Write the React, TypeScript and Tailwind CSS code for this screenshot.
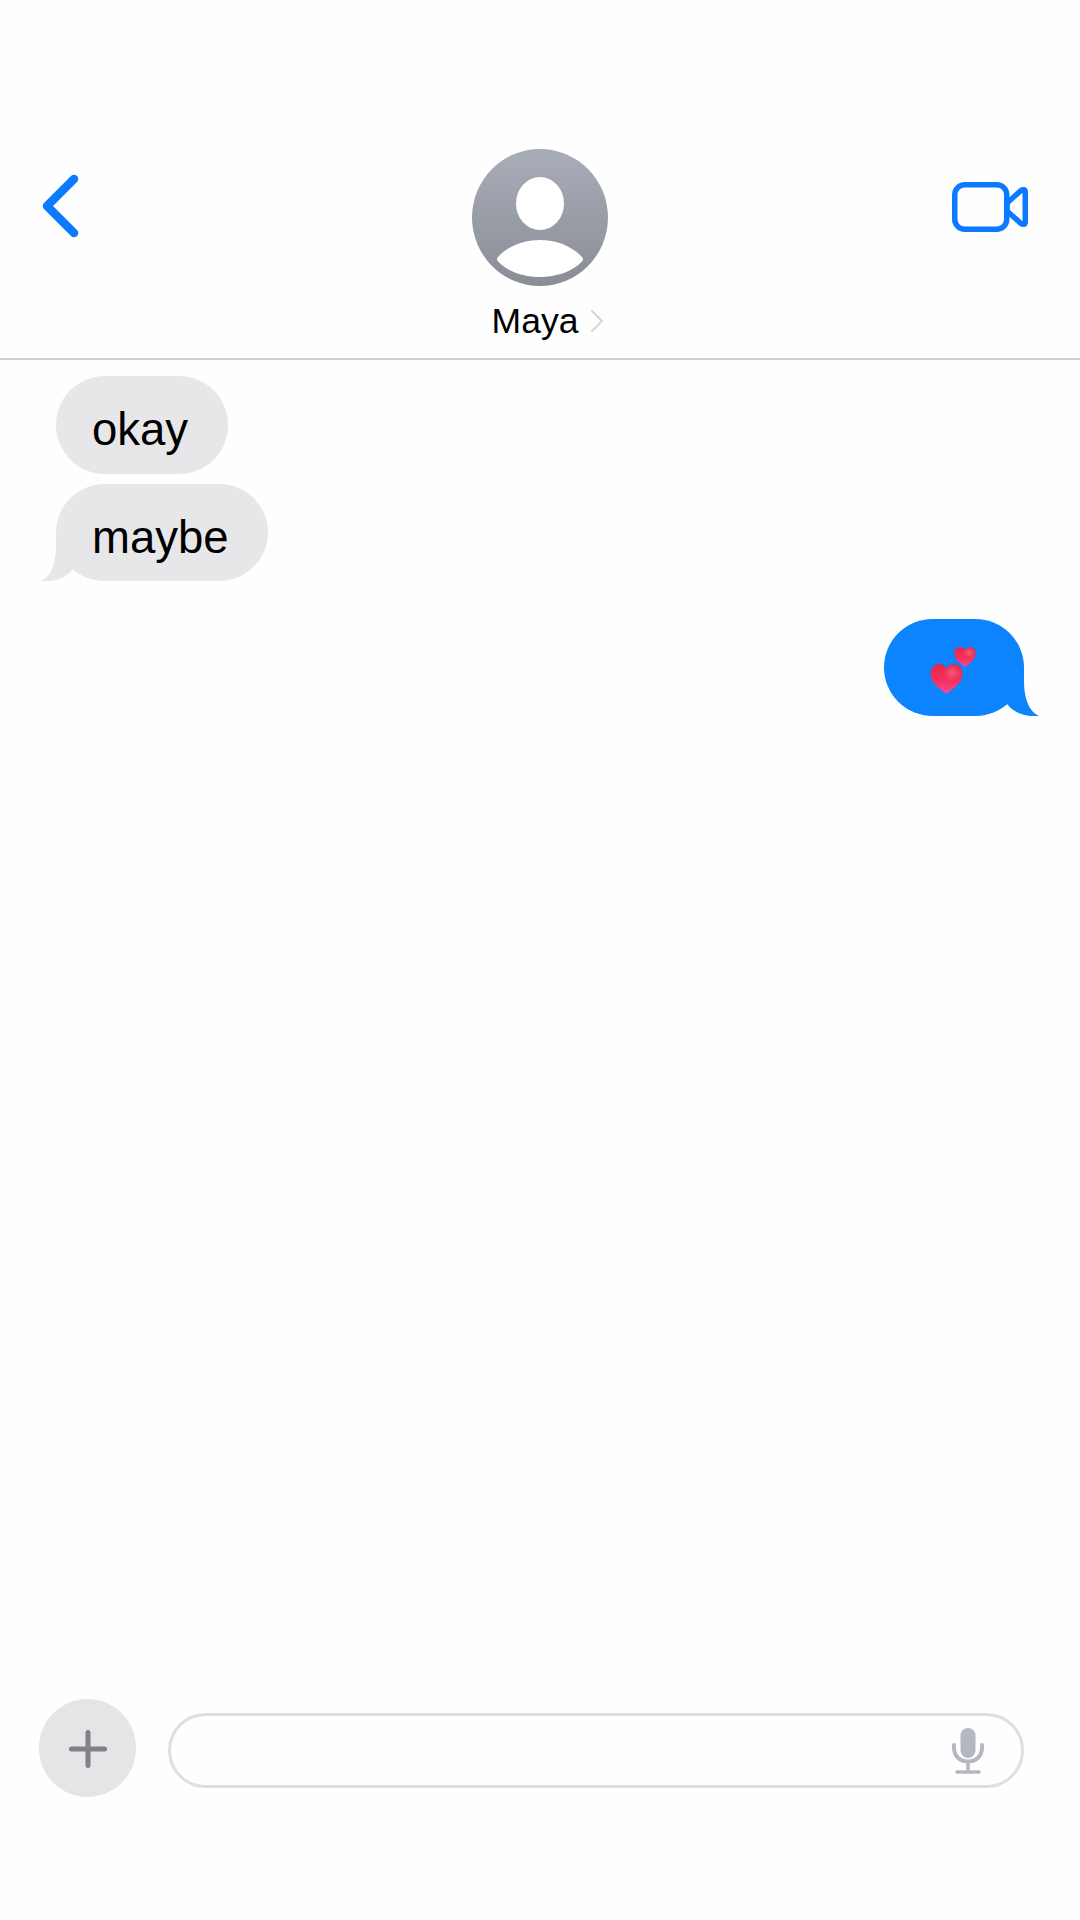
const HEART =
  "M16 30C12 26.5 0 20 0 10C0 4 4 0 9 0C12.5 0 15 2 16 5C17 2 19.5 0 23 0C28 0 32 4 32 10C32 20 20 26.5 16 30Z";

function Heart({ id, className }: { id: string; className: string }) {
  return (
    <svg viewBox="0 0 32 30" className={className}>
      <defs>
        <linearGradient id={id} x1="0" y1="0" x2="0" y2="1">
          <stop offset="0" stopColor="#e42748" />
          <stop offset="0.55" stopColor="#f6305c" />
          <stop offset="1" stopColor="#f24a9c" />
        </linearGradient>
        <radialGradient id={id + "h"} cx="0.68" cy="0.28" r="0.28">
          <stop offset="0" stopColor="#ff8fa5" stopOpacity="0.45" />
          <stop offset="1" stopColor="#ff8fa5" stopOpacity="0" />
        </radialGradient>
      </defs>
      <path d={HEART} fill={`url(#${id})`} />
      <path d={HEART} fill={`url(#${id}h)`} />
    </svg>
  );
}

function Tail({ className, fill }: { className: string; fill: string }) {
  return (
    <svg viewBox="0 0 40 50" className={className}>
      <path d="M15 0L15 16C15 32 10 46 0 50C12 51 24 48 31 39L40 30L40 0Z" fill={fill} />
    </svg>
  );
}

export default function App() {
  const bubbleText = "text-[45.5px] leading-[108px] text-black";
  return (
    <div className="h-[1920px] w-[1080px] flex flex-col bg-[#fefefe] font-['Liberation_Sans',sans-serif]">
      <header className="pt-[149px] border-b-2 border-[#d0d0d2] h-[360px] grid grid-cols-[1fr_auto_1fr] items-start">
        <div className="pl-[41px] pt-[25px]">
          <svg viewBox="0 0 39 64" className="w-[39px] h-[64px]" fill="none">
            <path d="M33 5L6 32L33 59" stroke="#0a7bff" strokeWidth="8.5" strokeLinecap="round" strokeLinejoin="round" />
          </svg>
        </div>
        <div className="flex flex-col items-center">
          <svg viewBox="0 0 136 137" className="w-[136px] h-[137px]">
            <defs>
              <linearGradient id="av" x1="0" y1="0" x2="0" y2="1">
                <stop offset="0" stopColor="#a8adb7" />
                <stop offset="1" stopColor="#8a8d96" />
              </linearGradient>
            </defs>
            <ellipse cx="68" cy="68.5" rx="68" ry="68.5" fill="url(#av)" />
            <ellipse cx="68" cy="54.5" rx="24" ry="26.5" fill="#fff" />
            <path d="M25 110C25 109 25.5 108.5 26 108C36 97 52 91 68 91C84 91 100 97 110 108C110.5 108.5 111 109 111 110C111 111 110.5 112 110 112.5C100 123 84 128 68 128C52 128 36 123 26 112.5C25.5 112 25 111 25 110Z" fill="#fff" />
          </svg>
          <div className="flex items-center ml-4 mt-[15px] gap-[12px] h-[40px]">
            <span className="text-[35.5px] leading-[40px] text-black">Maya</span>
            <svg viewBox="0 0 14 24" className="w-[14px] h-[24px]" fill="none">
              <path d="M2 2L12 12L2 22" stroke="#d6d6d9" strokeWidth="2" strokeLinecap="round" strokeLinejoin="round" />
            </svg>
          </div>
        </div>
        <div className="justify-self-end pr-[52px] pt-[33px]">
          <svg viewBox="0 0 76 50" className="w-[76px] h-[50px]" fill="none" stroke="#0a7bff" strokeWidth="5.5" strokeLinejoin="round">
            <rect x="2.75" y="2.75" width="52" height="44.5" rx="10" />
            <path d="M55 21L69 8.5C71 7 73.25 7.5 73.25 10V40C73.25 42.5 71 43 69 41.5L55 29Z" />
          </svg>
        </div>
      </header>

      <main className="flex-1 flex flex-col pt-[16px] pl-[56px] pr-[56px]">
        <div className="self-start w-[172px] h-[98px] rounded-[49px] bg-[#e7e7e9] pl-[36px]">
          <span className={bubbleText}>okay</span>
        </div>
        <div className="relative self-start mt-[10px] w-[212px] h-[97px] rounded-[49px] bg-[#e7e7e9] pl-[36px]">
          <Tail className="absolute left-[-15px] bottom-0 w-[40px] h-[50px]" fill="#e7e7e9" />
          <span className={"relative " + bubbleText}>maybe</span>
        </div>
        <div className="relative self-end mt-[38px] w-[140px] h-[97px] rounded-[49px] bg-[#0b84fe]">
          <Tail className="absolute right-[-15px] bottom-0 w-[40px] h-[50px] -scale-x-100" fill="#0b84fe" />
          <Heart id="h2" className="absolute left-[70px] top-[28px] w-[22px] h-[20px]" />
          <Heart id="h1" className="absolute left-[46px] top-[45px] w-[33px] h-[30px]" />
        </div>
      </main>

      <footer className="flex items-center pl-[39px] pr-[56px] pb-[123px] gap-[32px]">
        <div className="w-[97px] h-[98px] shrink-0 rounded-full bg-[#e5e5e7] flex items-center justify-center">
          <svg viewBox="0 0 38 38" className="w-[38px] h-[38px] mt-[2px]" fill="none">
            <path d="M19 2.5V35.5M2.5 19H35.5" stroke="#808085" strokeWidth="5" strokeLinecap="round" />
          </svg>
        </div>
        <div className="flex-1 h-[75px] mt-[5px] rounded-[37.5px] border-[3px] border-[#dedee0] flex items-center justify-end pr-[37px]">
          <svg viewBox="0 0 32 46" className="w-[32px] h-[46px] mt-[1px]" fill="none" stroke="#b4b7c0">
            <rect x="8.5" y="0" width="15" height="30" rx="7.5" fill="#b4b7c0" stroke="none" />
            <path d="M2 17V20C2 28 8 33.5 16 33.5C24 33.5 30 28 30 20V17" strokeWidth="4" strokeLinecap="round" />
            <path d="M16 33.5V43" strokeWidth="3.5" />
            <path d="M5 44H27" strokeWidth="3.5" strokeLinecap="round" />
          </svg>
        </div>
      </footer>
    </div>
  );
}
